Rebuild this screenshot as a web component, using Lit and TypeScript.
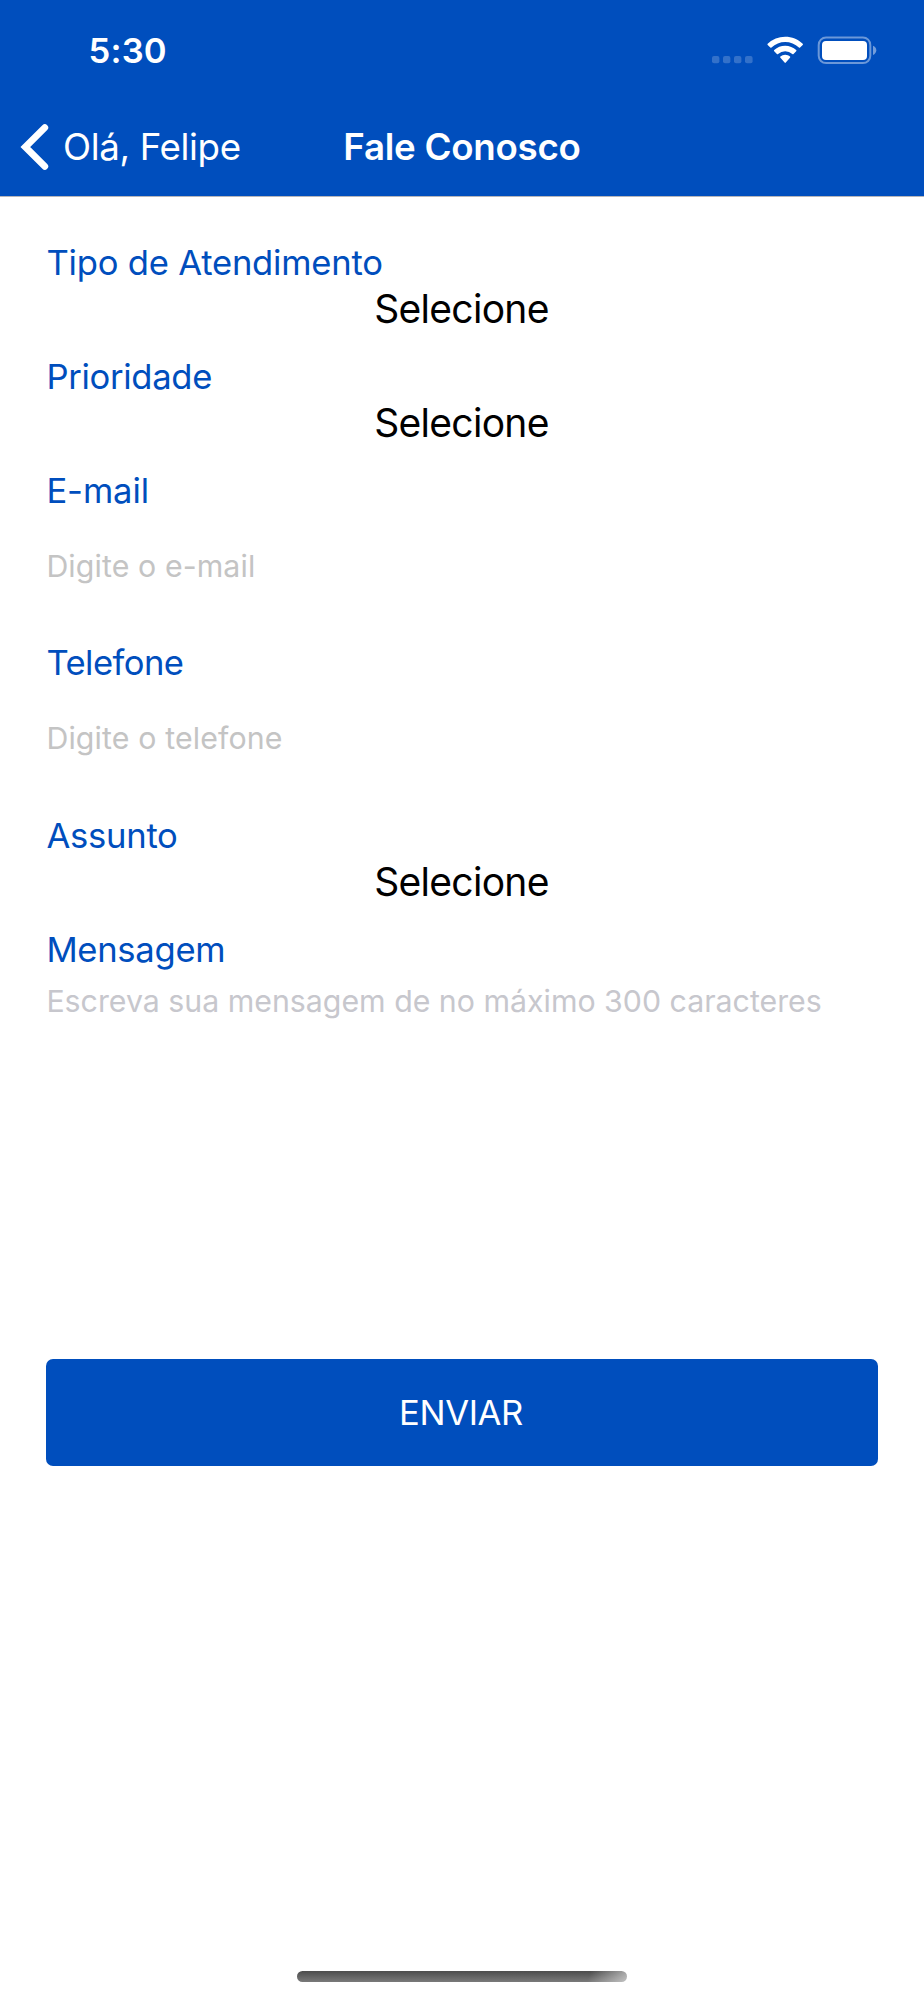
import { LitElement, html, css } from "lit";
import { customElement, property } from "lit/decorators.js";

type Kind = "select" | "input" | "textarea";

interface Field {
  label: string;
  kind: Kind;
  text: string;
  labelSpacing: number;
  textSpacing: number;
}

const FIELDS: Field[] = [
  { label: "Tipo de Atendimento", kind: "select", text: "Selecione", labelSpacing: -0.2, textSpacing: -0.7 },
  { label: "Prioridade", kind: "select", text: "Selecione", labelSpacing: -0.3, textSpacing: -0.7 },
  { label: "E-mail", kind: "input", text: "Digite o e-mail", labelSpacing: -0.1, textSpacing: 0.1 },
  { label: "Telefone", kind: "input", text: "Digite o telefone", labelSpacing: -0.55, textSpacing: 0.13 },
  { label: "Assunto", kind: "select", text: "Selecione", labelSpacing: -0.25, textSpacing: -0.7 },
  {
    label: "Mensagem",
    kind: "textarea",
    text: "Escreva sua mensagem de no máximo 300 caracteres",
    labelSpacing: -0.28,
    textSpacing: 0,
  },
];

@customElement("status-bar")
export class StatusBar extends LitElement {
  static styles = css`
    :host {
      display: flex;
      justify-content: space-between;
      align-items: center;
      height: 100px;
      padding: 0 46px 0 88.5px;
    }
    .time {
      font-size: 34.6px;
      font-weight: 600;
      letter-spacing: 0.18px;
      line-height: 44px;
    }
    .icons {
      display: block;
    }
  `;

  render() {
    return html`
      <span class="time">5:30</span>
      <svg class="icons" width="168" height="30" viewBox="710 35 168 30" fill="none">
        <g fill="#fff" fill-opacity="0.2">
          <rect x="712" y="56" width="7.4" height="7.2" rx="2" />
          <rect x="723" y="56" width="7.4" height="7.2" rx="2" />
          <rect x="734" y="56" width="7.4" height="7.2" rx="2" />
          <rect x="745" y="56" width="7.6" height="7.2" rx="2" />
        </g>
        <g fill="#fff">
          <path d="M785.2 36.7c6.7 0 12.9 2.6 17.5 7q.6.6 0 1.2l-2.600 2.6q-.6.6-1.2 0a19.8 19.8 0 0 0-27.4 0q-.6.6-1.2 0l-2.6-2.6q-.6-.6 0-1.2a25.3 25.3 0 0 1 17.5-7z" />
          <path d="M785.2 45.7c4.2 0 8.100 1.6 11 4.3q.6.6 0 1.2l-2.7 2.7q-.6.6-1.2 0a10.6 10.6 0 0 0-14.2 0q-.6.6-1.2 0l-2.7-2.7q-.6-.6 0-1.2a16.2 16.2 0 0 1 11-4.3z" />
          <path d="M785.2 54.8c1.9 0 3.5.7 4.8 1.8q.6.6 0 1.2l-4.2 4.8q-.6.7-1.2 0l-4.2-4.8q-.6-.6 0-1.2a7.2 7.2 0 0 1 4.8-1.8z" />
        </g>
        <rect x="818.7" y="37.5" width="51.600" height="25.6" rx="7.4" stroke="#fff" stroke-opacity="0.42" stroke-width="2" />
        <rect x="822" y="41" width="45" height="18.9" rx="4" fill="#fff" />
        <path d="M873 45.7c2 .7 3.3 2.5 3.3 4.6s-1.3 3.9-3.3 4.6z" fill="#fff" fill-opacity="0.45" />
      </svg>
    `;
  }
}

@customElement("nav-bar")
export class NavBar extends LitElement {
  @property() back = "";
  @property() heading = "";

  static styles = css`
    :host {
      display: grid;
      grid-template-columns: 1fr auto 1fr;
      align-items: center;
      height: 93px;
      font-size: 36.7px;
      line-height: 46px;
      white-space: nowrap;
    }
    .back {
      display: flex;
      align-items: center;
      gap: 13px;
      padding-left: 20px;
      letter-spacing: -0.36px;
    }
    .chevron {
      display: block;
      flex: none;
    }
    .title {
      font-weight: 600;
      letter-spacing: -0.27px;
    }
  `;

  render() {
    return html`
      <div class="back">
        <svg class="chevron" width="30" height="50" viewBox="0 0 30 50" fill="none">
          <path d="M24.8 5.6 5.3 25l19.5 19.4" stroke="#fff" stroke-width="6.8" stroke-linecap="round" stroke-linejoin="miter" />
        </svg>
        <span>${this.back}</span>
      </div>
      <div class="title">${this.heading}</div>
    `;
  }
}

@customElement("form-field")
export class FormField extends LitElement {
  @property({ attribute: false }) field!: Field;

  static styles = css`
    :host {
      display: block;
    }
    .label {
      font-size: 34.6px;
      line-height: 44px;
      color: #004ebd;
    }
    .select {
      padding: 1px 1px 0 0;
      font-size: 39px;
      line-height: 48px;
      text-align: center;
      color: #000;
    }
    .input {
      padding-top: 1px;
      font-size: 30.3px;
      line-height: 106.6px;
      color: #c4c4c4;
    }
    .textarea {
      height: 379px;
      padding-top: 10.6px;
      box-sizing: border-box;
      font-size: 30.3px;
      line-height: 40px;
      color: #c7c7cd;
      white-space: nowrap;
    }
  `;

  render() {
    const f = this.field;
    return html`
      <div class="label" style="letter-spacing:${f.labelSpacing}px">${f.label}</div>
      <div class=${f.kind} style="letter-spacing:${f.textSpacing}px">${f.text}</div>
    `;
  }
}

@customElement("app-root")
export class AppRoot extends LitElement {
  static styles = css`
    :host {
      display: flex;
      flex-direction: column;
      box-sizing: border-box;
      height: 2000px;
      background: #fff;
      font-family: Inter, "Liberation Sans", sans-serif;
      font-weight: 400;
    }
    .header {
      height: 195.5px;
      flex: none;
      box-sizing: content-box;
      background: #004ebd;
      border-bottom: 1px solid #b5b5ba;
      color: #fff;
    }
    .form {
      flex: 1;
      display: flex;
      flex-direction: column;
      gap: 21px;
      padding: 43px 46.4px 0;
    }
    .send {
      display: flex;
      align-items: center;
      justify-content: center;
      height: 107px;
      margin-top: -11.4px;
      border: 0;
      border-radius: 7px;
      background: #004ebd;
      color: #fff;
      font: inherit;
      font-size: 34.6px;
      letter-spacing: -0.37px;
      padding: 0 2px 1px 0;
    }
    .home {
      align-self: center;
      flex: none;
      width: 330px;
      height: 11px;
      margin-bottom: 18px;
      border-radius: 6px;
      background: linear-gradient(110deg, rgba(255, 255, 255, 0) 88%, rgba(255, 255, 255, 0.5) 99%),
        linear-gradient(#4c4c4c, #7a7a7a);
    }
  `;

  render() {
    return html`
      <header class="header">
        <status-bar></status-bar>
        <nav-bar back="Olá, Felipe" heading="Fale Conosco"></nav-bar>
      </header>
      <main class="form">
        ${FIELDS.map((f) => html`<form-field .field=${f}></form-field>`)}
        <button class="send">ENVIAR</button>
      </main>
      <div class="home"></div>
    `;
  }
}
